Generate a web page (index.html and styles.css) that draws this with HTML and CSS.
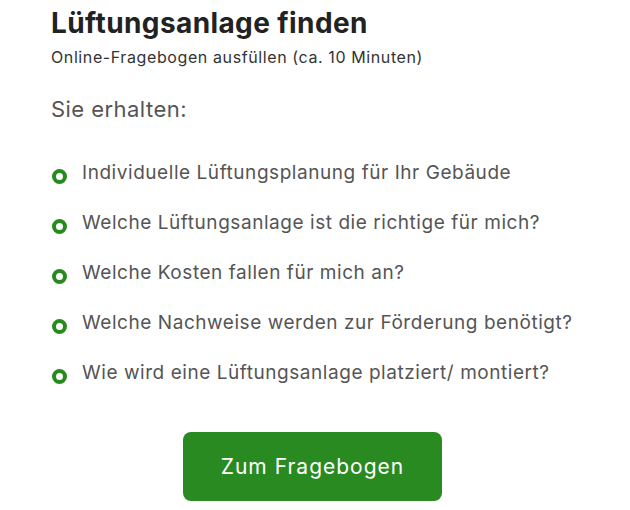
FILE: index.html
```html
<!DOCTYPE html>
<html lang="de">
<head>
<meta charset="utf-8">
<link rel="stylesheet" href="styles.css">
</head>
<body>
<main class="card">
  <h1 class="title">Lüftungsanlage finden</h1>
  <p class="subtitle">Online-Fragebogen ausfüllen (ca. 10 Minuten)</p>
  <h2 class="lead">Sie erhalten:</h2>
  <ul class="list">
    <li class="item"><span class="dot"></span>Individuelle Lüftungsplanung für Ihr Gebäude</li>
    <li class="item"><span class="dot"></span>Welche Lüftungsanlage ist die richtige für mich?</li>
    <li class="item"><span class="dot"></span>Welche Kosten fallen für mich an?</li>
    <li class="item"><span class="dot"></span>Welche Nachweise werden zur Förderung benötigt?</li>
    <li class="item"><span class="dot"></span>Wie wird eine Lüftungsanlage platziert/ montiert?</li>
  </ul>
  <div class="actions">
    <a class="btn" href="#">Zum Fragebogen</a>
  </div>
</main>
</body>
</html>
```

FILE: styles.css
```css
* { box-sizing: border-box; }
html, body { margin: 0; padding: 0; background: #fff; }
body { font-family: Inter, "Noto Sans", sans-serif; color: #333; }
.card { padding: 6px 0 0 51px; width: 630px; }
.title { margin: 0; font-size: 28px; font-weight: 700; color: #222; line-height: 34px; letter-spacing: 0.4px; }
.subtitle { margin: 7px 0 0; font-size: 16px; color: #333; line-height: 20px; letter-spacing: 0.6px; }
.lead { margin: 28px 0 0; font-size: 22px; font-weight: 400; color: #555; line-height: 28px; letter-spacing: 0.45px; }
.list { list-style: none; margin: 38px 0 0; padding: 0; display: flex; flex-direction: column; gap: 26px; }
.item { display: flex; align-items: center; gap: 15px; font-size: 19px; color: #555; line-height: 24px; letter-spacing: 0.55px; }
.dot { width: 15px; height: 15px; border: 4px solid #268a1e; border-radius: 50%; flex: none; margin: 6px 0 0 1px; }
.actions { width: 523px; display: flex; justify-content: center; margin-top: 47px; }
.btn { display: flex; align-items: center; justify-content: center; width: 259px; height: 69px; background: #2a8a22; color: #fff; border-radius: 8px; text-decoration: none; font-size: 21px; letter-spacing: 1px; }
```
